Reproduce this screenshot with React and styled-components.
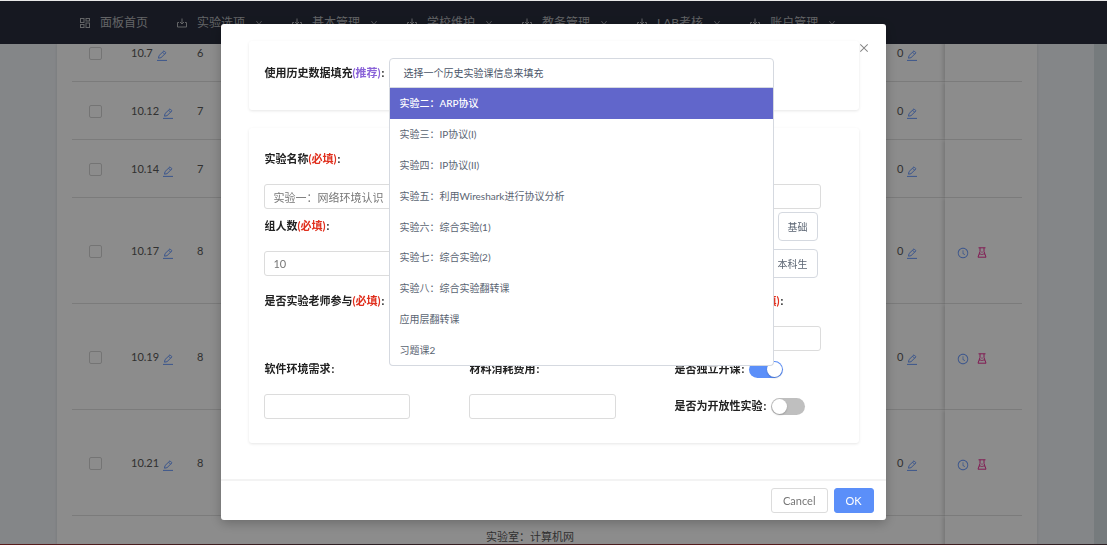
import React, { useState } from 'react';
import styled, { createGlobalStyle } from 'styled-components';
import { AiOutlineClockCircle, AiOutlineClose, AiOutlineDown } from 'react-icons/ai';

const GlobalStyle = createGlobalStyle`
  * {
    box-sizing: border-box;
  }

  body {
    margin: 0;
    font-family: Lato, 'Noto Sans CJK SC', sans-serif;
    font-size: 11px;
    line-height: 16px;
    color: #595959;
  }

  button,
  input {
    font: inherit;
    color: inherit;
  }
`;

const Page = styled.div`
  height: 100vh;
  display: flex;
  flex-direction: column;
  overflow: hidden;
  background: #f1f4f8;
  border-top: 1px solid #e8e8e8;
`;

const Nav = styled.nav`
  position: relative;
  z-index: 1;
  flex: none;
  display: flex;
  align-items: center;
  gap: 29px;
  height: 43px;
  padding: 0 80px;
  background: #282d3c;
`;

const NavLink = styled.a`
  display: flex;
  align-items: center;
  gap: 10px;
  font-size: 12px;
  color: #b4b6ba;
  text-decoration: none;
  white-space: nowrap;
`;

const Main = styled.main`
  flex: 1;
  min-height: 0;
  display: flex;
  overflow: hidden;
  padding-left: 57px;
  border-right: 13px solid #d8e1e3;
`;

const Panel = styled.section`
  flex: 1;
  margin-right: 57px;
  padding: 0 15px;
  background: #fff;
  box-shadow: 0 0 3px rgba(0, 0, 0, 0.12);
`;

const Table = styled.table`
  width: 100%;
  margin-top: -20px;
  table-layout: fixed;
  border-collapse: separate;
  border-spacing: 0;
`;

const Row = styled.tr`
  height: ${props => (props.$tall ? '106px' : '58px')};
`;

const Cell = styled.td`
  padding: 0 13px;
  border-bottom: 1px solid #e0e0e0;
  color: #595959;
  font-size: 11px;
  white-space: nowrap;
  text-align: ${props => props.$align || 'left'};
`;

const NoteCell = styled(Cell)`
  padding-top: 13px;
  vertical-align: top;
`;

const ActionCell = styled(Cell)`
  padding: 0 12px;
  box-shadow: -2px 0 4px rgba(0, 0, 0, 0.16);
  clip-path: inset(0 0 0 -6px);
`;

const Actions = styled.div`
  display: flex;
  align-items: center;
  gap: 8px;
  padding-top: 4px;
`;

const IconButton = styled.button`
  display: inline-flex;
  padding: 0;
  border: none;
  background: none;
  color: ${props => props.$color || '#6c9cff'};
  cursor: pointer;
`;

const EditButton = styled(IconButton)`
  margin-left: 4px;
  vertical-align: -4px;
`;

const Check = styled.input`
  appearance: none;
  display: inline-block;
  width: 13px;
  height: 13px;
  margin: 0;
  vertical-align: middle;
  border: 1px solid #d4d4d4;
  border-radius: 2px;
`;

const BottomLine = styled.div`
  position: fixed;
  z-index: 11;
  left: 0;
  right: 0;
  bottom: 0;
  height: 1px;
  background: linear-gradient(90deg, #5a1a1a, #2c2024, #5a1a1a, #2c2024);
`;

const Overlay = styled.div`
  position: fixed;
  z-index: 10;
  inset: 1px 0 0;
  background: rgba(0, 0, 0, 0.45);
`;

const Dialog = styled.div`
  position: relative;
  width: 60%;
  margin: 23px auto;
  border-radius: 3px;
  background: #fff;
  box-shadow: 0 3px 12px rgba(0, 0, 0, 0.25);
`;

const CloseButton = styled(IconButton)`
  position: absolute;
  top: 18px;
  right: 16px;
  color: #858585;
`;

const DialogBody = styled.div`
  padding: 17px 27px 36px 28px;
`;

const Card = styled.section`
  border-radius: 3px;
  box-shadow: 0 1px 3px rgba(0, 0, 0, 0.1);
  padding: ${props => props.$padding};

  & + & {
    margin-top: 18px;
  }
`;

const HistoryRow = styled.div`
  display: flex;
  align-items: center;
`;

const Label = styled.label`
  font-weight: 700;
  color: #222;
  line-height: 22px;
  white-space: nowrap;
`;

const HistoryLabel = styled(Label)`
  flex: 0 0 125px;
`;

const Mark = styled.span`
  color: ${props => props.$color};
`;

const Colon = styled.span`
  margin-left: 1px;
`;

const SelectBox = styled.div`
  position: relative;
  flex: 1;
`;

const SelectTrigger = styled.button`
  display: block;
  width: 100%;
  height: 30px;
  padding: 0 13px;
  border: 1px solid #d5d9e0;
  border-radius: 4px 4px 0 0;
  background: #fff;
  color: #4a5568;
  font-size: 10px;
  line-height: 26px;
  text-align: left;
`;

const Menu = styled.ul`
  position: absolute;
  z-index: 2;
  top: 100%;
  left: 0;
  right: 0;
  display: flex;
  flex-direction: column;
  height: 278px;
  margin: 0;
  padding: 0;
  list-style: none;
  background: #fff;
  border: 1px solid #d5d9e0;
  border-top: none;
  border-radius: 0 0 4px 4px;
`;

const Option = styled.li`
  flex: 1;
  display: flex;
  align-items: center;
  padding: 0 9px;
  font-size: 10px;
  font-weight: ${props => (props.$active ? 500 : 400)};
  color: ${props => (props.$active ? '#fff' : '#5a6472')};
  background: ${props => (props.$active ? '#6166cb' : 'transparent')};
  cursor: pointer;
`;

const FormRow = styled.div`
  display: grid;
  grid-template-columns: repeat(3, 1fr);
  column-gap: 59px;
  align-items: ${props => props.$align || 'start'};
  margin-top: ${props => props.$top || '0'};
`;

const Field = styled.div`
  display: flex;
  flex-direction: column;
  gap: 14px;
  min-height: 60px;
  grid-column: ${props => props.$column || 'auto'};
  justify-content: ${props => (props.$end ? 'flex-end' : 'flex-start')};
`;

const TextInput = styled.input`
  width: 100%;
  height: 25px;
  margin-bottom: -1px;
  padding: 0 8px;
  border: 1px solid #dcdcdc;
  border-radius: 3px;
  background: #fff;
  outline: none;
  color: #777;
`;

const ChoiceGroup = styled.div`
  grid-column: 3;
  display: flex;
  flex-direction: column;
  align-items: flex-end;
  gap: 8px;
  padding-right: 3px;
`;

const ChoiceButton = styled.button`
  height: 29px;
  padding: 0 9px;
  border: 1px solid #d5d9e0;
  border-radius: 4px;
  background: #fff;
  color: #5a6472;
  font-size: 10px;
  line-height: 26px;
`;

const SwitchList = styled.div`
  display: flex;
  flex-direction: column;
  gap: 15px;
`;

const SwitchLine = styled.div`
  display: flex;
  align-items: center;
  gap: 5px;
`;

const Switch = styled.input`
  appearance: none;
  display: flex;
  flex: none;
  width: 34px;
  height: 17px;
  margin: 0;
  padding: 1px;
  border-radius: 9px;
  background: #bfbfbf;

  &::before {
    content: '';
    width: 15px;
    height: 15px;
    border-radius: 50%;
    background: #fff;
    box-shadow: 0 1px 2px rgba(0, 0, 0, 0.2);
  }

  &:checked {
    justify-content: flex-end;
    background: #5b8ff9;
  }
`;

const DialogFooter = styled.footer`
  display: flex;
  justify-content: flex-end;
  gap: 6px;
  padding: 7px 12px;
  border-top: 2px solid #f3f3f3;
`;

const FooterButton = styled.button`
  height: 25px;
  padding: 0 11px;
  border: 1px solid ${props => (props.$primary ? '#5b8ff9' : '#dcdcdc')};
  border-radius: 3px;
  background: ${props => (props.$primary ? '#5b8ff9' : '#fff')};
  color: ${props => (props.$primary ? '#fff' : '#777')};
  line-height: 22px;
`;

const NAV_ITEMS = ['实验选项', '基本管理', '学校维护', '教务管理', 'LAB考核', '账户管理'];

const HISTORY = [
  '实验二：ARP协议',
  '实验三：IP协议(I)',
  '实验四：IP协议(II)',
  '实验五：利用Wireshark进行协议分析',
  '实验六：综合实验(1)',
  '实验七：综合实验(2)',
  '实验八：综合实验翻转课',
  '应用层翻转课',
  '习题课2',
];

const ROWS = [
  { date: '10.7', week: 6 },
  { date: '10.12', week: 7 },
  { date: '10.14', week: 7 },
  { date: '10.17', week: 8, tall: true },
  { date: '10.19', week: 8, tall: true },
  { date: '10.21', week: 8, tall: true },
];

const DashboardIcon = () => (
  <svg width="10" height="10" viewBox="0 0 10 10" fill="none" stroke="currentColor" aria-hidden="true">
    <rect x="0.5" y="0.5" width="3.5" height="4" />
    <rect x="6" y="0.5" width="3.5" height="2.5" />
    <rect x="0.5" y="6.5" width="3.5" height="3" />
    <rect x="6" y="5" width="3.5" height="4.5" />
  </svg>
);

const TrayIcon = () => (
  <svg width="10" height="10" viewBox="0 0 10 10" fill="none" stroke="currentColor" aria-hidden="true">
    <path d="M5 0.5v5.5M3 4l2 2 2-2" />
    <path d="M2 4.5H0.5v4.5h9V4.5H8" />
  </svg>
);

const PencilIcon = () => (
  <svg width="10" height="11" viewBox="0 0 10 11" fill="none" stroke="currentColor" aria-hidden="true">
    <path d="M1.5 8.2l0.5-2.6L7 0.8l2 2-5 4.9-2.5 0.5zM5.6 2.2l2 2" strokeLinejoin="round" />
    <path d="M0 10.4h10" />
  </svg>
);

const FlaskIcon = () => (
  <svg width="10" height="11" viewBox="0 0 10 11" fill="none" stroke="currentColor" aria-hidden="true">
    <path d="M1.5 0.8h7M3 0.8v3.7L1 10.2h8L7 4.5V0.8" />
    <path d="M2.2 7.2c1.2-0.8 2 0.6 3 0.3s1.5-0.8 2.6-0.3M5 4.5v1.2" />
  </svg>
);

const Required = () => <Mark $color="#e0301e">(必填)</Mark>;

const Edit = () => (
  <EditButton type="button" aria-label="编辑">
    <PencilIcon />
  </EditButton>
);

export default function App() {
  const [active, setActive] = useState(0);
  const [independent, setIndependent] = useState(true);
  const [isOpenLab, setIsOpenLab] = useState(false);

  return (
    <>
      <GlobalStyle />
      <Page>
        <Nav>
          <NavLink href="#home">
            <DashboardIcon />
            面板首页
          </NavLink>
          {NAV_ITEMS.map(item => (
            <NavLink key={item} href="#menu">
              <TrayIcon />
              {item}
              <AiOutlineDown size={8} />
            </NavLink>
          ))}
        </Nav>

        <Main>
          <Panel>
            <Table>
              <colgroup>
                <col width="46" />
                <col width="66" />
                <col width="45" />
                <col width="244" />
                <col />
                <col width="61" />
                <col width="77" />
              </colgroup>
              <tbody>
                {ROWS.map(row => (
                  <Row key={row.date} $tall={row.tall}>
                    <Cell $align="center">
                      <Check type="checkbox" aria-label={row.date} />
                    </Cell>
                    <Cell>
                      {row.date}
                      <Edit />
                    </Cell>
                    <Cell>{row.week}</Cell>
                    <Cell />
                    <Cell />
                    <Cell>
                      0
                      <Edit />
                    </Cell>
                    <ActionCell>
                      {row.tall && (
                        <Actions>
                          <IconButton type="button" aria-label="时间">
                            <AiOutlineClockCircle size={12} />
                          </IconButton>
                          <IconButton type="button" aria-label="实验" $color="#eb2f96">
                            <FlaskIcon />
                          </IconButton>
                        </Actions>
                      )}
                    </ActionCell>
                  </Row>
                ))}
                <Row $tall>
                  <Cell colSpan={4} />
                  <NoteCell>实验室：计算机网</NoteCell>
                  <Cell />
                  <ActionCell />
                </Row>
              </tbody>
            </Table>
          </Panel>
        </Main>
      </Page>

      <Overlay>
        <Dialog role="dialog" aria-modal="true">
          <CloseButton type="button" aria-label="关闭">
            <AiOutlineClose size={12} />
          </CloseButton>

          <DialogBody>
            <Card $padding="17px 85px 22px 15px">
              <HistoryRow>
                <HistoryLabel htmlFor="history">
                  使用历史数据填充<Mark $color="#8a63d8">(推荐)</Mark>
                  <Colon>:</Colon>
                </HistoryLabel>
                <SelectBox>
                  <SelectTrigger id="history" type="button" aria-haspopup="listbox" aria-expanded="true">
                    选择一个历史实验课信息来填充
                  </SelectTrigger>
                  <Menu role="listbox">
                    {HISTORY.map((item, index) => (
                      <Option
                        key={item}
                        role="option"
                        aria-selected={index === active}
                        $active={index === active}
                        onMouseEnter={() => setActive(index)}
                      >
                        {item}
                      </Option>
                    ))}
                  </Menu>
                </SelectBox>
              </HistoryRow>
            </Card>

            <Card $padding="20px 38px 25px 15px">
              <FormRow>
                <Field>
                  <Label htmlFor="name">
                    实验名称<Required />
                    <Colon>:</Colon>
                  </Label>
                  <TextInput id="name" defaultValue="实验一：网络环境认识" />
                </Field>
                <Field $column="3" $end>
                  <TextInput aria-label="实验内容" />
                </Field>
              </FormRow>

              <FormRow $top="4px" $align="center">
                <Field>
                  <Label htmlFor="size">
                    组人数<Required />
                    <Colon>:</Colon>
                  </Label>
                  <TextInput id="size" defaultValue="10" />
                </Field>
                <ChoiceGroup>
                  <ChoiceButton type="button">基础</ChoiceButton>
                  <ChoiceButton type="button">本科生</ChoiceButton>
                </ChoiceGroup>
              </FormRow>

              <FormRow $top="12px">
                <Field>
                  <Label as="span">
                    是否实验老师参与<Required />
                    <Colon>:</Colon>
                  </Label>
                </Field>
                <Field $column="3">
                  <Label htmlFor="room">
                    实验室类型选择<Required />
                    <Colon>:</Colon>
                  </Label>
                  <TextInput id="room" />
                </Field>
              </FormRow>

              <FormRow $top="8px">
                <Field>
                  <Label htmlFor="software">
                    软件环境需求<Colon>:</Colon>
                  </Label>
                  <TextInput id="software" />
                </Field>
                <Field>
                  <Label htmlFor="cost">
                    材料消耗费用<Colon>:</Colon>
                  </Label>
                  <TextInput id="cost" />
                </Field>
                <SwitchList>
                  <SwitchLine>
                    <Label htmlFor="independent">
                      是否独立开课<Colon>:</Colon>
                    </Label>
                    <Switch
                      id="independent"
                      type="checkbox"
                      checked={independent}
                      onChange={() => setIndependent(!independent)}
                    />
                  </SwitchLine>
                  <SwitchLine>
                    <Label htmlFor="open-lab">
                      是否为开放性实验<Colon>:</Colon>
                    </Label>
                    <Switch
                      id="open-lab"
                      type="checkbox"
                      checked={isOpenLab}
                      onChange={() => setIsOpenLab(!isOpenLab)}
                    />
                  </SwitchLine>
                </SwitchList>
              </FormRow>
            </Card>
          </DialogBody>

          <DialogFooter>
            <FooterButton type="button">Cancel</FooterButton>
            <FooterButton type="button" $primary>
              OK
            </FooterButton>
          </DialogFooter>
        </Dialog>
      </Overlay>
      <BottomLine />
    </>
  );
}
